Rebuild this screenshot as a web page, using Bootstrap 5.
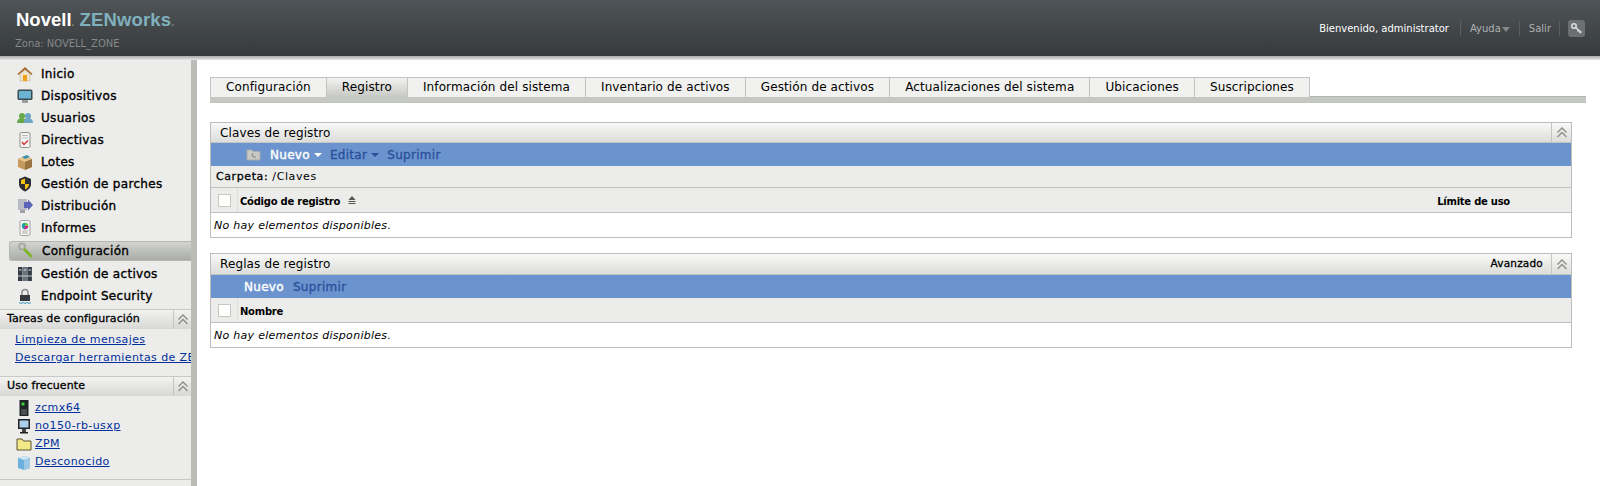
<!DOCTYPE html>
<html lang="es">
<head>
<meta charset="UTF-8">
<title>ZENworks - Configuración</title>
<link href="https://cdn.jsdelivr.net/npm/bootstrap@5.3.0/dist/css/bootstrap.min.css" rel="stylesheet">
<style>
  html, body { height: 486px; overflow: hidden; }
  body { font-family: "DejaVu Sans", sans-serif; font-size: 11px; color: #000; background: #fff; }
  a { color: #00309c; }
  .top-bar { height: 56px; background: linear-gradient(#4f5458, #363a3c); padding: 0 15px 0 16px; }
  .logo-main { font-family: "Liberation Sans", sans-serif; font-weight: 700; font-size: 18.5px; line-height: 20px; color: #fff; padding-top: 10px; }
  .logo-main span { color: #7fb0bc; letter-spacing: .15px; }
  .logo-main small { font-size: 10px; color: #8a9094; }
  .zone-text { font-size: 10px; color: #85898b; margin-top: 3px; margin-left: -1px; letter-spacing: -.03px; }
  .top-right { font-size: 10px; color: #aeb1b2; }
  .top-right .welcome { color: #fff; }
  .top-sep { width: 1px; height: 15px; background: #5b5f61; margin: 0 9px; }
  .top-sep.first-sep { margin-left: 11px; }
  .top-sep.last-sep { margin-right: 8px; margin-left: 8px; }
  .key-btn { width: 17px; height: 17px; background: #6d7072; border-radius: 3px; }
  .help-arrow { width: 0; height: 0; border: 4px solid transparent; border-top: 5px solid #85898b; border-bottom: 0; margin-left: 1px; margin-top: 2px; }
  .top-shade { height: 4px; background: linear-gradient(#a9abaa, #e4e5e4); }
  .page-body { height: 426px; }
  .side-col { width: 197px; background: #ececea; border-right: 6px solid #b9bcb7; flex: none; overflow: hidden; }
  .side-nav { padding-top: 3px; height: 249px; }
  .side-item { height: 22px; padding-left: 16px; font-size: 12px; -webkit-text-stroke: .35px #000; letter-spacing: .3px; white-space: nowrap; }
  .side-item svg { width: 18px; height: 18px; flex: none; margin-right: 7px; }
  .side-item.is-on { height: 20px; margin: 2px 0 2px 9px; padding-left: 7px; background: linear-gradient(#d3d4d1, #a9aca7); border: 1px solid #b5b7b2; border-right: 0; border-radius: 3px 0 0 3px; }
  .side-head { height: 20px; background: linear-gradient(#f2f2f0, #d8d9d6); border-top: 1px solid #c8c9c6; font-size: 11px; -webkit-text-stroke: .3px #000; letter-spacing: .1px; padding-left: 7px; white-space: nowrap; }
  .side-head .collapse-box { margin-left: auto; width: 18px; border-left: 1px solid #c4c5c2; height: 100%; }
  .side-links { padding: 2px 0 9px 15px; white-space: nowrap; overflow: hidden; font-size: 11px; letter-spacing: .4px; }
  .side-links div { height: 18px; line-height: 18px; }
  .freq-list { padding: 3px 0 8px 16px; font-size: 11px; letter-spacing: .4px; border-bottom: 1px solid #c8c9c6; height: 84px; }
  .freq-list div { height: 18px; }
  .freq-list svg { width: 16px; height: 16px; margin-right: 3px; flex: none; }
  .main-col { padding: 17px 14px 0 13px; flex: 1; min-width: 0; }
  .tab-row { height: 19px; }
  .tab-cell { height: 20px; padding: 0 15px 1px; font-size: 12px; letter-spacing: .12px; background: #f1f1ef; border: 1px solid #c3c4c1; border-left: 0; border-bottom: 0; white-space: nowrap; }
  .tab-cell:first-child { border-left: 1px solid #c3c4c1; }
  .tab-cell.is-on { background: linear-gradient(#f3f3f1, #c6c8c4); }
  .tab-base { height: 7px; background: #c6c8c4; border-top: 1px solid #b4b6b2; border-bottom: 1px solid #c0c2be; margin-bottom: 19px; }
  .panel-box { width: 1362px; border: 1px solid #bdbdbb; margin-bottom: 15px; }
  .panel-title { height: 20px; padding-left: 9px; background: linear-gradient(#f9f9f8, #dcdddb); font-size: 12px; letter-spacing: .12px; border-bottom: 1px solid #c5c6c3; }
  .panel-title.tall-title { height: 21px; }
  .panel-title .collapse-box { width: 20px; height: 100%; border-left: 1px solid #c5c6c3; }
  .adv-link { margin-left: auto; margin-right: 8px; font-size: 10.5px; -webkit-text-stroke: .3px #000; letter-spacing: .2px; }
  .action-bar { height: 23px; background: #6b94ce; font-size: 12px; -webkit-text-stroke: .3px #2a4f9b; letter-spacing: .3px; color: #2a4f9b; }
  .action-bar.with-folder { padding-left: 27px; }
  .action-bar.no-folder { padding-left: 33px; }
  .action-bar .act-on { color: #fff; -webkit-text-stroke: .4px #fff; }
  .caret-w, .caret-b { width: 0; height: 0; border: 4px solid transparent; border-bottom: 0; margin-left: 4px; }
  .caret-w { border-top: 4px solid #fff; }
  .caret-b { border-top: 4px solid #2a4f9b; }
  .gap-item { margin-left: 8px; }
  .gap-first { margin-left: 9px; }
  .gap-wide { margin-left: 9px; }
  .folder-row { height: 22px; background: #ecedeb; padding: 1px 0 0 5px; font-size: 11px; letter-spacing: .6px; border-bottom: 1px solid #c0c1be; }
  .folder-label { -webkit-text-stroke: .3px #000; }
  .head-row { height: 25px; background: #ecedeb; font-size: 10px; font-weight: 700; letter-spacing: -.25px; border-bottom: 1px solid #c0c1be; }
  .head-text { padding-top: 2px; margin-left: 2px; }
  .head-text.limit-text { margin-left: auto; margin-right: 61px; }
  .check-cell { width: 27px; height: 100%; border-right: 1px solid #dedfdc; flex: none; }
  .check-mark { width: 13px; height: 13px; background: #fff; border: 1px solid #c7c8c2; }
  .empty-row { height: 24px; padding: 2px 0 0 3px; font-size: 11px; font-style: italic; letter-spacing: .28px; }
</style>
</head>
<body>
<header class="top-bar d-flex justify-content-between">
  <div>
    <div class="logo-main">Novell<small>.</small> <span>ZENworks</span><small>.</small></div>
    <div class="zone-text">Zona: NOVELL_ZONE</div>
  </div>
  <div class="top-right d-flex align-items-center">
    <span class="welcome">Bienvenido, administrator</span>
    <span class="top-sep first-sep"></span>
    <span>Ayuda</span><span class="help-arrow"></span>
    <span class="top-sep"></span>
    <span>Salir</span>
    <span class="top-sep last-sep"></span>
    <span class="key-btn d-flex align-items-center justify-content-center">
      <svg width="13" height="13" viewBox="0 0 13 13"><circle cx="4" cy="4" r="2.2" fill="none" stroke="#ddd" stroke-width="1.6"/><path d="M5.5 5.5l6 5M8.5 8l-1 1.5M10.5 9.7l-1 1.3" stroke="#ddd" stroke-width="1.5" fill="none"/></svg>
    </span>
  </div>
</header>
<div class="top-shade"></div>
<div class="page-body d-flex">
  <aside class="side-col">
    <nav class="side-nav">
      <div class="side-item d-flex align-items-center"><svg viewBox="0 0 18 18"><path d="M9 2L1.5 9l1 1L9 4.5 15.500 10l1-1z" fill="#a5672a"/><path d="M4 9.500L9 5l5 4.500V16H4z" fill="#efe6d2" stroke="#b5a98f" stroke-width=".5"/><rect x="7" y="10" width="4" height="6" fill="#f0a010"/></svg>Inicio</div>
      <div class="side-item d-flex align-items-center"><svg viewBox="0 0 18 18"><rect x="1.500" y="2.500" width="15" height="10.500" rx="1.500" fill="#3d4a50"/><rect x="3" y="4" width="12" height="7.500" fill="#6cb4d4"/><rect x="6" y="13" width="6" height="3" fill="#9aa0a2"/></svg>Dispositivos</div>
      <div class="side-item d-flex align-items-center"><svg viewBox="0 0 18 18"><circle cx="6" cy="7" r="3" fill="#68a84a"/><path d="M1 14c0-4 2.500-5 5-5s4 1.500 4 5z" fill="#68a84a"/><circle cx="12" cy="7" r="3" fill="#6ea4c4"/><path d="M8 14c0-4 2-5 4-5s5 1 5 5z" fill="#6ea4c4"/></svg>Usuarios</div>
      <div class="side-item d-flex align-items-center"><svg viewBox="0 0 18 18"><rect x="4" y="1.500" width="10" height="15" rx="1.500" fill="#f4f4f2" stroke="#8e8f8c"/><path d="M6 4.500h6M6 7h6" stroke="#bbb"/><path d="M6 11l2 2.500 4-4" stroke="#d03030" stroke-width="1.400" fill="none"/></svg>Directivas</div>
      <div class="side-item d-flex align-items-center"><svg viewBox="0 0 18 18"><path d="M2 6l7-3 7 3v8l-7 3-7-3z" fill="#c39a5c"/><path d="M2 6l7 3 7-3-7-3z" fill="#e6c58c"/><path d="M9 9v8l7-3V6z" fill="#9a7440"/><path d="M6 4l5-2 3 2-5 2z" fill="#3d8fb0"/></svg>Lotes</div>
      <div class="side-item d-flex align-items-center"><svg viewBox="0 0 18 18"><path d="M9 1.500l6 2.500v5c0 4-3 6-6 7.500C6 15 3 13 3 9V4z" fill="#2b2f33"/><path d="M9 3.500v5.500H5V5zM9 9h4c0 3-2 4.500-4 5.500z" fill="#f4c20d"/></svg>Gestión de parches</div>
      <div class="side-item d-flex align-items-center"><svg viewBox="0 0 18 18"><rect x="2" y="2" width="9" height="11" fill="#b9bcc2"/><rect x="4" y="13" width="5" height="3" fill="#9ea2a8"/><path d="M8 5h4V2.500L17 8l-5 5.500V11H8z" fill="#5b64b8"/></svg>Distribución</div>
      <div class="side-item d-flex align-items-center"><svg viewBox="0 0 18 18"><rect x="4" y="1.500" width="10" height="15" rx="1.500" fill="#f6f6f4" stroke="#a2a3a0"/><circle cx="9" cy="7" r="3.200" fill="#18a0a8"/><path d="M9 7V3.800A3.200 3.200 0 0 1 12.200 7z" fill="#7cbf3f"/><path d="M9 7h3.200A3.200 3.200 0 0 1 8 10z" fill="#e0208a"/><path d="M6 12h6M6 14h6" stroke="#aaa"/></svg>Informes</div>
      <div class="side-item is-on d-flex align-items-center"><svg viewBox="0 0 18 18"><circle cx="5" cy="4.500" r="3" fill="none" stroke="#a8aaa6" stroke-width="2"/><path d="M7 7l8 8" stroke="#7fb52e" stroke-width="3"/></svg>Configuración</div>
      <div class="side-item d-flex align-items-center"><svg viewBox="0 0 18 18"><rect x="2" y="2" width="4.500" height="14" fill="#333c44"/><rect x="6.700" y="2" width="4.500" height="14" fill="#66727c"/><rect x="11.400" y="2" width="4.500" height="14" fill="#333c44"/><path d="M3 5h2.500M7.800 5h2.500M12.500 5H15" stroke="#ddd"/><path d="M2 11h14" stroke="#c9ced2"/></svg>Gestión de activos</div>
      <div class="side-item d-flex align-items-center"><svg viewBox="0 0 18 18"><path d="M6 8V5.500a3 3 0 0 1 6 0V8" stroke="#8c8e8c" stroke-width="1.500" fill="none"/><rect x="4" y="8" width="10" height="6" fill="#33383c"/><path d="M3 15.500l2 1 2-1 2 1 2-1 2 1 2-1" stroke="#3c9ac4" fill="none"/></svg>Endpoint Security</div>
    </nav>
    <div class="side-head d-flex align-items-center">Tareas de configuración
      <span class="collapse-box d-flex align-items-center justify-content-center"><svg width="12" height="11" viewBox="0 0 12 11"><path d="M1.500 5.500L6 1l4.500 4.500M1.500 10L6 5.500l4.500 4.500" fill="none" stroke="#8b8d8a" stroke-width="1.300"/></svg></span>
    </div>
    <div class="side-links">
      <div><a href="#">Limpieza de mensajes</a></div>
      <div><a href="#">Descargar herramientas de ZENworks</a></div>
    </div>
    <div class="side-head d-flex align-items-center">Uso frecuente
      <span class="collapse-box d-flex align-items-center justify-content-center"><svg width="12" height="11" viewBox="0 0 12 11"><path d="M1.500 5.500L6 1l4.500 4.500M1.500 10L6 5.500l4.500 4.500" fill="none" stroke="#8b8d8a" stroke-width="1.300"/></svg></span>
    </div>
    <div class="freq-list">
      <div class="d-flex align-items-center"><svg viewBox="0 0 16 16"><rect x="3.500" y="0" width="9" height="16" fill="#1e2224"/><rect x="5.500" y="2.500" width="3" height="3" fill="#38d038"/><path d="M6 9v6M8 9v6M10 9v6" stroke="#777"/></svg><a href="#">zcmx64</a></div>
      <div class="d-flex align-items-center"><svg viewBox="0 0 16 16"><rect x="2" y="1" width="12" height="10" fill="#222"/><rect x="3.500" y="2.500" width="9" height="7" fill="#a8d0ec"/><rect x="6" y="11" width="4" height="3" fill="#444"/><rect x="4" y="14" width="8" height="1.500" fill="#222"/></svg><a href="#">no150-rb-usxp</a></div>
      <div class="d-flex align-items-center"><svg viewBox="0 0 16 16"><path d="M1 3h5l1.500 2H15v9H1z" fill="#f4e886" stroke="#5a5530"/></svg><a href="#">ZPM</a></div>
      <div class="d-flex align-items-center"><svg viewBox="0 0 16 16"><path d="M2 4l7-2 5 2v10l-6 2-6-2z" fill="#6ab0dc"/><path d="M2 4l6 2 6-2-5-2z" fill="#cfe6f4"/><path d="M8 6v10l6-2V4z" fill="#9cc8e6"/></svg><a href="#">Desconocido</a></div>
    </div>
  </aside>
  <main class="main-col">
    <div class="tab-row d-flex">
      <div class="tab-cell d-flex align-items-center">Configuración</div>
      <div class="tab-cell is-on d-flex align-items-center">Registro</div>
      <div class="tab-cell d-flex align-items-center">Información del sistema</div>
      <div class="tab-cell d-flex align-items-center">Inventario de activos</div>
      <div class="tab-cell d-flex align-items-center">Gestión de activos</div>
      <div class="tab-cell d-flex align-items-center">Actualizaciones del sistema</div>
      <div class="tab-cell d-flex align-items-center">Ubicaciones</div>
      <div class="tab-cell d-flex align-items-center">Suscripciones</div>
    </div>
    <div class="tab-base"></div>

    <section class="panel-box">
      <div class="panel-title d-flex align-items-center justify-content-between">
        <span>Claves de registro</span>
        <span class="collapse-box d-flex align-items-center justify-content-center"><svg width="12" height="11" viewBox="0 0 12 11"><path d="M1.500 5.500L6 1l4.500 4.500M1.500 10L6 5.500l4.500 4.500" fill="none" stroke="#8b8d8a" stroke-width="1.300"/></svg></span>
      </div>
      <div class="action-bar with-folder d-flex align-items-center">
        <svg class="ms-2" width="15" height="13" viewBox="0 0 15 13"><path d="M1 2h5l1 1.500h7V12H1z" fill="#c9c9c6" stroke="#aaa"/><path d="M7.500 5L5.500 7h1.500v2h3" fill="none" stroke="#888"/></svg>
        <span class="act-on gap-first">Nuevo</span><span class="caret-w"></span>
        <span class="gap-item">Editar</span><span class="caret-b"></span>
        <span class="gap-item">Suprimir</span>
      </div>
      <div class="folder-row d-flex align-items-center"><span class="folder-label">Carpeta:</span>&nbsp;/Claves</div>
      <div class="head-row d-flex align-items-center">
        <span class="check-cell d-flex align-items-center justify-content-center"><span class="check-mark"></span></span>
        <span class="head-text">Código de registro</span>
        <svg class="ms-2" width="8" height="8" viewBox="0 0 8 8"><path d="M4 0l3.500 4h-7z" fill="#555"/><path d="M.5 5.500h7M.5 7.500h7" stroke="#555"/></svg>
        <span class="head-text limit-text">Límite de uso</span>
      </div>
      <div class="empty-row d-flex align-items-center">No hay elementos disponibles.</div>
    </section>

    <section class="panel-box">
      <div class="panel-title tall-title d-flex align-items-center">
        <span>Reglas de registro</span>
        <span class="adv-link">Avanzado</span>
        <span class="collapse-box d-flex align-items-center justify-content-center"><svg width="12" height="11" viewBox="0 0 12 11"><path d="M1.500 5.500L6 1l4.500 4.500M1.500 10L6 5.500l4.500 4.500" fill="none" stroke="#8b8d8a" stroke-width="1.300"/></svg></span>
      </div>
      <div class="action-bar no-folder d-flex align-items-center">
        <span class="act-on">Nuevo</span>
        <span class="gap-wide">Suprimir</span>
      </div>
      <div class="head-row d-flex align-items-center">
        <span class="check-cell d-flex align-items-center justify-content-center"><span class="check-mark"></span></span>
        <span class="head-text">Nombre</span>
      </div>
      <div class="empty-row d-flex align-items-center">No hay elementos disponibles.</div>
    </section>
  </main>
</div>
</body>
</html>
